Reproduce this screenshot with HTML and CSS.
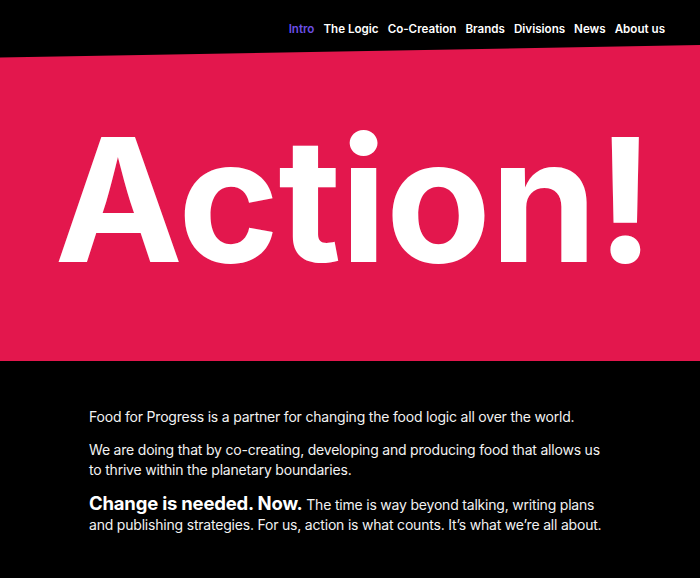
FILE: index.html
```html
<!DOCTYPE html>
<html lang="en">
<head>
<meta charset="utf-8">
<title>Food for Progress</title>
<link rel="stylesheet" href="styles.css">
</head>
<body>
<header class="top">
  <nav class="nav">
    <a class="nav-link active" href="#">Intro</a>
    <a class="nav-link" href="#">The Logic</a>
    <a class="nav-link" href="#">Co-Creation</a>
    <a class="nav-link" href="#">Brands</a>
    <a class="nav-link" href="#">Divisions</a>
    <a class="nav-link" href="#">News</a>
    <a class="nav-link" href="#">About us</a>
  </nav>
</header>
<section class="hero">
  <h1 class="hero-title">Action!</h1>
</section>
<main class="intro">
  <p class="p">Food for Progress is a partner for changing the food logic all over the world.</p>
  <p class="p">We are doing that by co-creating, developing and producing food that allows us to thrive within the planetary boundaries.</p>
  <p class="p"><strong class="lead">Change is needed. Now.</strong> The time is way beyond talking, writing plans and publishing strategies. For us, action is what counts. It’s what we’re all about.</p>
</main>
</body>
</html>
```

FILE: styles.css
```css
html, body {
  margin: 0;
  padding: 0;
  background: #000;
}
body {
  font-family: Inter, "Noto Sans", sans-serif;
  color: #f2f2f2;
  height: 578px;
  overflow: hidden;
}
.top {
  height: 45px;
  display: flex;
  justify-content: flex-end;
  align-items: flex-start;
  padding-right: 35px;
}
.nav {
  display: flex;
  gap: 9px;
  margin-top: 22px;
}
.nav-link {
  font-size: 11.6px;
  font-weight: 600;
  color: #fff;
  text-decoration: none;
  line-height: 15px;
}
.nav-link.active {
  color: #6b4fe6;
}
.hero {
  height: 316px;
  background: #e3174d;
  clip-path: polygon(0 12.5px, 100% 0, 100% 100%, 0 100%);
  display: flex;
  justify-content: center;
  align-items: center;
  padding-left: 8px;
  box-sizing: border-box;
}
.hero-title {
  margin: 0 0 8px;
  font-size: 172px;
  font-weight: 700;
  line-height: 1;
  letter-spacing: -1px;
  color: #fff;
}
.intro {
  padding: 46px 0 0 89px;
  width: 516px;
}
.p {
  margin: 0 0 13px;
  font-size: 14px;
  line-height: 20px;
  letter-spacing: -0.2px;
}
.lead {
  font-size: 18.5px;
  font-weight: 700;
  letter-spacing: -0.2px;
  color: #fff;
}
```
